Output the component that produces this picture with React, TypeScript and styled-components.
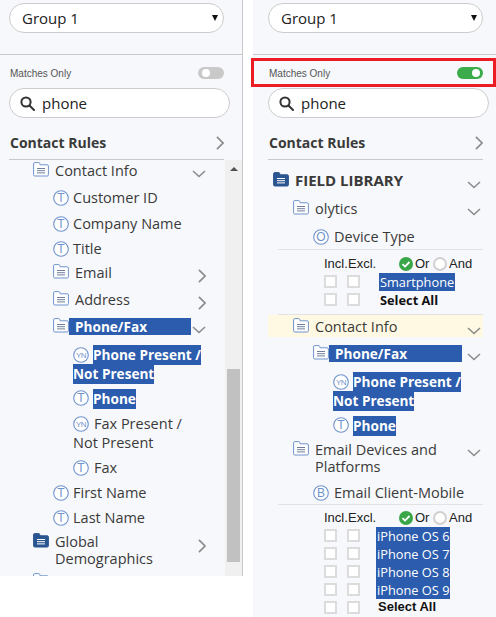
import React from 'react';
import styled, { createGlobalStyle } from 'styled-components';

const GlobalStyle = createGlobalStyle`
  html, body {
    margin: 0;
    padding: 0;
    background: #fff;
    overflow: hidden;
  }
  body {
    font-family: 'Open Sans', sans-serif;
    color: #333;
  }
`;

const blue = '#2b5cad';
const iconBlue = '#6f93cc';

const Page = styled.div`
  display: flex;
  align-items: flex-start;
  width: 496px;
  height: 617px;
`;

const Panel = styled.div<{ $right?: boolean }>`
  position: relative;
  width: 243px;
  height: ${(p) => (p.$right ? '617px' : '576px')};
  margin-left: ${(p) => (p.$right ? '10px' : '0')};
  background: #f7f8fb;
  border-right: ${(p) => (p.$right ? 'none' : '1px solid #c8c8c8')};
  box-sizing: border-box;
  padding: 3px 0 0 ${(p) => (p.$right ? '15px' : '9px')};
`;

const GroupSelect = styled.div`
  display: flex;
  align-items: center;
  justify-content: space-between;
  box-sizing: border-box;
  width: 215px;
  height: 30px;
  padding: 0 5px 0 12px;
  background: #fff;
  border: 1px solid #ccc;
  border-radius: 15px;
  font-size: 15px;
  color: #222;
`;

const Caret = styled.span`
  width: 0;
  height: 0;
  border-left: 3.5px solid transparent;
  border-right: 3.5px solid transparent;
  border-top: 6px solid #111;
`;

const Divider = styled.div`
  height: 1px;
  margin-top: 21px;
  background: #c8c8c8;
`;

const LeftDivider = styled(Divider)`
  margin-left: -9px;
`;

const RightDivider = styled(Divider)`
  margin-left: -15px;
`;

const MatchesRow = styled.div`
  display: flex;
  align-items: center;
  justify-content: space-between;
  box-sizing: border-box;
  width: 215px;
  height: 18px;
  margin-top: 9px;
  padding-left: 1px;
  font-family: 'Liberation Sans', sans-serif;
  font-size: 10px;
  color: #555;
`;

const Toggle = styled.span<{ $on?: boolean }>`
  position: relative;
  display: block;
  width: 26px;
  height: 12px;
  border-radius: 6px;
  background: ${(p) => (p.$on ? '#3bab4c' : '#c9c9c9')};

  &::after {
    content: '';
    position: absolute;
    top: 2px;
    left: ${(p) => (p.$on ? '15px' : '4px')};
    width: 8px;
    height: 8px;
    border-radius: 50%;
    background: #fff;
  }
`;

const Highlight = styled.div`
  position: absolute;
  left: -2px;
  top: 58px;
  width: 245px;
  height: 29px;
  box-sizing: border-box;
  border: 3px solid #ec1c24;
`;

const SearchBox = styled.div`
  display: flex;
  align-items: center;
  gap: 7px;
  box-sizing: border-box;
  width: 221px;
  height: 30px;
  margin-top: 6px;
  padding-left: 10px;
  background: #fff;
  border: 1px solid #ccc;
  border-radius: 15px;
  font-size: 15px;
  color: #222;
`;

const SectionRow = styled.div`
  display: flex;
  align-items: center;
  justify-content: space-between;
  box-sizing: border-box;
  width: 215px;
  height: 42px;
  padding: 8px 0 0 1px;
  border-bottom: 1px solid #c8c8c8;
  font-size: 14px;
  font-weight: 700;
  color: #3a3a3a;
`;

const Tree = styled.div`
  position: relative;
  width: 215px;
  font-size: 14.5px;
  line-height: 17px;
`;

const LeftTree = styled(Tree)`
  height: 416px;
  overflow: hidden;
`;

const Row = styled.div<{ $indent: number; $height: number; $pad?: number; $tint?: boolean }>`
  position: relative;
  display: flex;
  align-items: flex-start;
  box-sizing: border-box;
  height: ${(p) => p.$height}px;
  padding-left: ${(p) => p.$indent}px;
  padding-top: ${(p) => p.$pad ?? 3}px;
  background: ${(p) => (p.$tint ? '#fff9e3' : 'transparent')};
`;

const IconSlot = styled.span<{ $gap: number; $drop?: number }>`
  flex: none;
  margin-right: ${(p) => p.$gap}px;
  margin-top: ${(p) => p.$drop ?? 0}px;
  line-height: 0;
`;

const InlineIcon = styled.span<{ $gap: number }>`
  display: inline-block;
  margin-right: ${(p) => p.$gap}px;
  vertical-align: -3px;
  line-height: 0;
`;

const Label = styled.span`
  display: block;
  color: #3a3a3a;
`;

const TitleLabel = styled(Label)`
  font-size: 15px;
  font-weight: 700;
`;

const TallLabel = styled(Label)`
  line-height: 19px;
`;

const Marked = styled.span`
  padding-bottom: 1px;
  background: ${blue};
  color: #fff;
  font-size: 13.6px;
  font-weight: 700;
`;

const MarkedBar = styled.span<{ $width: number }>`
  display: block;
  box-sizing: border-box;
  width: ${(p) => p.$width}px;
  height: 17px;
  padding-left: 6px;
  line-height: 17px;
  background: ${blue};
  color: #fff;
  font-size: 13.6px;
  font-weight: 700;
`;

const Chevron = styled.span<{ $right: number; $top: number }>`
  position: absolute;
  right: ${(p) => p.$right}px;
  top: ${(p) => p.$top}px;
  line-height: 0;
`;

const ScrollTrack = styled.div`
  position: absolute;
  left: 225px;
  top: 160px;
  width: 17px;
  height: 416px;
  background: #f0f0f0;
`;

const ScrollUp = styled.span`
  position: absolute;
  left: 5px;
  top: 7px;
  width: 0;
  height: 0;
  border-left: 4px solid transparent;
  border-right: 4px solid transparent;
  border-bottom: 4px solid #505050;
`;

const ScrollThumb = styled.span`
  position: absolute;
  left: 2px;
  top: 209px;
  width: 13px;
  height: 193px;
  background: #c1c1c1;
`;

const OptionBlock = styled.div`
  width: 205px;
  margin-left: 10px;
  font-family: 'Liberation Sans', sans-serif;
  color: #222;
`;

const OptionHead = styled.div<{ $height: number }>`
  display: grid;
  grid-template-columns: 24px 51px 34px auto;
  align-items: center;
  box-sizing: border-box;
  height: ${(p) => p.$height}px;
  padding: 4px 0 0 46px;
  border-top: 1px solid #e3e3e3;
  font-size: 13px;
  line-height: 18px;
`;

const HeadCell = styled.span`
  white-space: nowrap;
`;

const RadioLabel = styled.span`
  display: flex;
  align-items: center;
  gap: 2px;
  white-space: nowrap;
`;

const RadioEmpty = styled.span`
  display: block;
  box-sizing: border-box;
  width: 14px;
  height: 14px;
  background: #fff;
  border: 2px solid #d0d0d0;
  border-radius: 50%;
`;

const OptionRow = styled.div<{ $height: number }>`
  display: flex;
  align-items: flex-start;
  height: ${(p) => p.$height}px;
  padding-left: 46px;
`;

const Check = styled.span`
  display: block;
  flex: none;
  box-sizing: border-box;
  width: 13px;
  height: 13px;
  margin: 2px 10px 0 0;
  background: #fff;
  border: 2px solid #dcdcdc;
`;

const OptionText = styled.span<{ $shift: number }>`
  margin-left: ${(p) => p.$shift}px;
  font-family: 'Open Sans', sans-serif;
  font-size: 12.8px;
  line-height: 18px;
  white-space: nowrap;
`;

const OptionMarked = styled(OptionText)`
  padding: 0 1px;
  background: ${blue};
  color: #fff;
`;

const SelectAll = styled(OptionText)`
  font-weight: 700;
  color: #111;
`;

const SelectAllArial = styled(SelectAll)`
  font-family: 'Liberation Sans', sans-serif;
  font-size: 13px;
  line-height: 15px;
`;

const Rule = styled.div`
  width: 205px;
  height: 1px;
  margin-left: 10px;
  background: #e3e3e3;
`;

const SearchIcon = () => (
  <svg width="15" height="15" viewBox="0 0 15 15" fill="none" stroke="#333" strokeWidth="2">
    <circle cx="6" cy="6" r="4.6" />
    <path d="M9.5 9.5 14 14" strokeLinecap="round" />
  </svg>
);

const ChevronRight = ({ size = 14 }: { size?: number }) => (
  <svg width={size * 0.6} height={size} viewBox="0 0 9 15" fill="none" stroke="#8c8c8c" strokeWidth="1.8">
    <path d="M1 1l6.5 6.5L1 14" />
  </svg>
);

const ChevronDown = () => (
  <svg width="14" height="8" viewBox="0 0 14 8" fill="none" stroke="#8c8c8c" strokeWidth="1.6">
    <path d="M1 1l6 5.5L13 1" />
  </svg>
);

const DocIcon = ({ solid }: { solid?: boolean }) => (
  <svg width="16" height="15" viewBox="0 0 16 15">
    <path
      d="M.6 1.8Q.6.6 1.8.6h4q.6 0 .8.6l.5 1.6h7q1.3 0 1.3 1.2v8.8q0 1.2-1.2 1.2H1.8q-1.2 0-1.2-1.2z"
      fill={solid ? '#2b5590' : '#fff'}
      stroke={solid ? '#2b5590' : iconBlue}
      strokeWidth="1"
    />
    <path
      d="M4 6.5h8M4 8.7h8M4 10.9h8"
      stroke={solid ? '#fff' : '#6f7f99'}
      strokeWidth="1"
      fill="none"
    />
  </svg>
);

const CircleIcon = ({ letter }: { letter: string }) => (
  <svg width="16" height="16" viewBox="0 0 16 16">
    <circle cx="8" cy="8" r="7.3" fill="#fff" stroke={iconBlue} strokeWidth="1.1" />
    <text
      x="8"
      y={letter.length > 1 ? 10.8 : 12.4}
      textAnchor="middle"
      fontFamily="'Liberation Sans', sans-serif"
      fontSize={letter.length > 1 ? 8 : 12}
      letterSpacing={letter.length > 1 ? -0.6 : 0}
      fill={iconBlue}
    >
      {letter}
    </text>
  </svg>
);

const CheckedRadio = () => (
  <svg width="14" height="14" viewBox="0 0 14 14">
    <circle cx="7" cy="7" r="7" fill="#3aa648" />
    <path d="M3.5 7.2l2.5 2.4 4.5-4.6" fill="none" stroke="#fff" strokeWidth="1.8" />
  </svg>
);

const OptionHeader = ({ height }: { height: number }) => (
  <OptionHead $height={height}>
    <HeadCell>Incl.</HeadCell>
    <HeadCell>Excl.</HeadCell>
    <RadioLabel>
      <CheckedRadio />
      Or
    </RadioLabel>
    <RadioLabel>
      <RadioEmpty />
      And
    </RadioLabel>
  </OptionHead>
);

const Checks = () => (
  <>
    <Check />
    <Check />
  </>
);

const Field = ({ indent, height, letter, gap = 5, children }: {
  indent: number;
  height: number;
  letter: string;
  gap?: number;
  children: React.ReactNode;
}) => (
  <Row $indent={indent} $height={height}>
    <IconSlot $gap={gap} $drop={1}><CircleIcon letter={letter} /></IconSlot>
    <Label>{children}</Label>
  </Row>
);

const LeftPanel = () => (
  <Panel>
    <GroupSelect>
      Group 1
      <Caret />
    </GroupSelect>
    <LeftDivider />
    <MatchesRow>
      Matches Only
      <Toggle />
    </MatchesRow>
    <SearchBox>
      <SearchIcon />
      phone
    </SearchBox>
    <SectionRow>
      Contact Rules
      <ChevronRight />
    </SectionRow>
    <LeftTree>
      <Row $indent={24} $height={26} $pad={2}>
        <IconSlot $gap={6}><DocIcon /></IconSlot>
        <Label>Contact Info</Label>
        <Chevron $right={18} $top={10}><ChevronDown /></Chevron>
      </Row>
      <Field indent={44} height={26} letter="T" gap={4}>Customer ID</Field>
      <Field indent={44} height={25} letter="T" gap={4}>Company Name</Field>
      <Field indent={44} height={24} letter="T" gap={4}>Title</Field>
      <Row $indent={44} $height={27}>
        <IconSlot $gap={6}><DocIcon /></IconSlot>
        <Label>Email</Label>
        <Chevron $right={18} $top={8}><ChevronRight /></Chevron>
      </Row>
      <Row $indent={44} $height={27}>
        <IconSlot $gap={6}><DocIcon /></IconSlot>
        <Label>Address</Label>
        <Chevron $right={18} $top={8}><ChevronRight /></Chevron>
      </Row>
      <Row $indent={44} $height={27}>
        <IconSlot $gap={0}><DocIcon /></IconSlot>
        <MarkedBar $width={122}>Phone/Fax</MarkedBar>
        <Chevron $right={18} $top={11}><ChevronDown /></Chevron>
      </Row>
      <Row $indent={64} $height={44}>
        <TallLabel>
          <InlineIcon $gap={4}><CircleIcon letter="YN" /></InlineIcon>
          <Marked>Phone Present /</Marked>
          <br />
          <Marked>Not Present</Marked>
        </TallLabel>
      </Row>
      <Row $indent={64} $height={25}>
        <IconSlot $gap={4} $drop={1}><CircleIcon letter="T" /></IconSlot>
        <TallLabel><Marked>Phone</Marked></TallLabel>
      </Row>
      <Row $indent={64} $height={45}>
        <TallLabel>
          <InlineIcon $gap={5}><CircleIcon letter="YN" /></InlineIcon>
          Fax Present /
          <br />
          Not Present
        </TallLabel>
      </Row>
      <Field indent={64} height={25} letter="T">Fax</Field>
      <Field indent={44} height={25} letter="T" gap={4}>First Name</Field>
      <Field indent={44} height={24} letter="T" gap={4}>Last Name</Field>
      <Row $indent={24} $height={40}>
        <IconSlot $gap={6}><DocIcon solid /></IconSlot>
        <Label>Global<br />Demographics</Label>
        <Chevron $right={18} $top={9}><ChevronRight /></Chevron>
      </Row>
      <Row $indent={24} $height={6}>
        <IconSlot $gap={6}><DocIcon /></IconSlot>
      </Row>
    </LeftTree>
    <ScrollTrack>
      <ScrollUp />
      <ScrollThumb />
    </ScrollTrack>
  </Panel>
);

const RightPanel = () => (
  <Panel $right>
    <GroupSelect>
      Group 1
      <Caret />
    </GroupSelect>
    <RightDivider />
    <MatchesRow>
      Matches Only
      <Toggle $on />
    </MatchesRow>
    <Highlight />
    <SearchBox>
      <SearchIcon />
      phone
    </SearchBox>
    <SectionRow>
      Contact Rules
      <ChevronRight />
    </SectionRow>
    <Tree>
      <Row $indent={5} $height={37} $pad={12}>
        <IconSlot $gap={6}><DocIcon solid /></IconSlot>
        <TitleLabel>FIELD LIBRARY</TitleLabel>
        <Chevron $right={2} $top={21}><ChevronDown /></Chevron>
      </Row>
      <Row $indent={25} $height={28}>
        <IconSlot $gap={6}><DocIcon /></IconSlot>
        <Label>olytics</Label>
        <Chevron $right={2} $top={11}><ChevronDown /></Chevron>
      </Row>
      <Field indent={45} height={24} letter="O">Device Type</Field>
      <OptionBlock>
        <OptionHeader height={24} />
        <OptionRow $height={18}>
          <Checks />
          <OptionMarked $shift={9}>Smartphone</OptionMarked>
        </OptionRow>
        <OptionRow $height={23}>
          <Checks />
          <SelectAll $shift={10}>Select All</SelectAll>
        </OptionRow>
      </OptionBlock>
      <Rule />
      <Row $indent={25} $height={22} $tint>
        <IconSlot $gap={6}><DocIcon /></IconSlot>
        <Label>Contact Info</Label>
        <Chevron $right={2} $top={12}><ChevronDown /></Chevron>
      </Row>
      <Row $indent={45} $height={27} $pad={8}>
        <IconSlot $gap={0}><DocIcon /></IconSlot>
        <MarkedBar $width={133}>Phone/Fax</MarkedBar>
        <Chevron $right={2} $top={16}><ChevronDown /></Chevron>
      </Row>
      <Row $indent={65} $height={47} $pad={8}>
        <TallLabel>
          <InlineIcon $gap={4}><CircleIcon letter="YN" /></InlineIcon>
          <Marked>Phone Present /</Marked>
          <br />
          <Marked>Not Present</Marked>
        </TallLabel>
      </Row>
      <Row $indent={65} $height={27} $pad={5}>
        <IconSlot $gap={4} $drop={1}><CircleIcon letter="T" /></IconSlot>
        <TallLabel><Marked>Phone</Marked></TallLabel>
      </Row>
      <Row $indent={25} $height={43}>
        <IconSlot $gap={6}><DocIcon /></IconSlot>
        <Label>Email Devices and<br />Platforms</Label>
        <Chevron $right={2} $top={11}><ChevronDown /></Chevron>
      </Row>
      <Field indent={45} height={23} letter="B">Email Client-Mobile</Field>
      <OptionBlock>
        <OptionHeader height={23} />
        {[6, 7, 8, 9].map((v) => (
          <OptionRow $height={18} key={v}>
            <Checks />
            <OptionMarked $shift={6}>iPhone OS {v}</OptionMarked>
          </OptionRow>
        ))}
        <OptionRow $height={18}>
          <Checks />
          <SelectAllArial $shift={8}>Select All</SelectAllArial>
        </OptionRow>
      </OptionBlock>
    </Tree>
  </Panel>
);

export default function App() {
  return (
    <>
      <GlobalStyle />
      <Page>
        <LeftPanel />
        <RightPanel />
      </Page>
    </>
  );
}
